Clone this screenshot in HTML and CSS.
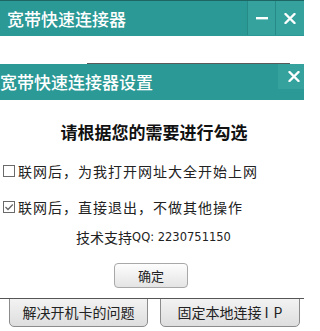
FILE: index.html
```html
<!DOCTYPE html>
<html lang="zh-CN">
<head>
<meta charset="utf-8">
<title>宽带快速连接器</title>
<link rel="stylesheet" href="styles.css">
</head>
<body>
<div class="main">
  <div class="titlebar">
    <div class="title">宽带快速连接器</div>
    <div class="win-btns">
      <div class="wbtn min"><svg width="12" height="4" viewBox="0 0 12 4"><rect x="0" y="1" width="12" height="2.4" fill="#fff"/></svg></div>
      <div class="wbtn close"><svg width="12" height="11" viewBox="0 0 12 11"><path d="M1.5 1 L10.5 10 M10.5 1 L1.5 10" stroke="#fff" stroke-width="2.4" stroke-linecap="round"/></svg></div>
    </div>
  </div>
  <div class="main-body">
    <div class="bottom-btns">
      <div class="big-btn">解决开机卡的问题</div>
      <div class="big-btn">固定本地连接<span class="ip">IP</span></div>
    </div>
  </div>
</div>

<div class="dialog">
  <div class="dlg-titlebar">
    <div class="dlg-title">宽带快速连接器设置</div>
    <div class="dlg-close"><svg width="12" height="11" viewBox="0 0 12 11"><path d="M1.5 1 L10.5 10 M10.5 1 L1.5 10" stroke="#fff" stroke-width="2.4" stroke-linecap="round"/></svg></div>
  </div>
  <div class="dlg-body">
    <div class="heading">请根据您的需要进行勾选</div>
    <div class="opt opt1"><span class="cbox"></span><span class="opt-text">联网后，为我打开网址大全开始上网</span></div>
    <div class="opt opt2"><span class="cbox checked"><svg width="10" height="10" viewBox="0 0 10 10"><path d="M1.5 5 L4 7.5 L8.8 2.5" fill="none" stroke="#666" stroke-width="1.3"/></svg></span><span class="opt-text">联网后，直接退出，不做其他操作</span></div>
    <div class="support"><span class="cn">技术支持</span><span class="qq">QQ: 2230751150</span></div>
    <div class="ok-btn">确定</div>
  </div>
</div>
</body>
</html>
```

FILE: styles.css
```css
* { box-sizing: border-box; }
html, body {
  margin: 0;
  padding: 0;
  width: 304px;
  height: 331px;
  overflow: hidden;
  background: #fff;
  font-family: "Noto Sans CJK SC", "Noto Sans", sans-serif;
}
.main {
  position: relative;
  width: 304px;
  height: 331px;
  display: flex;
  flex-direction: column;
}
.titlebar {
  height: 36px;
  background: #2b9995;
  border-top: 1px solid #1d6663;
  display: flex;
  align-items: stretch;
  justify-content: space-between;
}
.title {
  color: #fff;
  font-size: 17px;
  line-height: 35px;
  padding-left: 7px;
  font-weight: 500;
}
.win-btns {
  display: flex;
  height: 34px;
}
.wbtn {
  display: flex;
  align-items: center;
  justify-content: center;
  background: #35a29e;
  border-left: 1px solid #268a86;
}
.wbtn.min { width: 28px; }
.wbtn.close { width: 29px; }
.main-body {
  flex: 1;
  display: flex;
  flex-direction: column;
  justify-content: flex-end;
  padding-bottom: 4px;
}
.bottom-btns {
  display: flex;
  gap: 12px;
  padding-left: 9px;
}
.big-btn {
  height: 40px;
  padding-top: 10px;
  display: flex;
  align-items: center;
  justify-content: center;
  font-size: 14px;
  color: #222;
  border: 1px solid #8c8c8c;
  border-radius: 5px;
  background: linear-gradient(#fbfbfb, #dedede);
}
.big-btn:first-child { width: 139px; }
.big-btn:last-child { width: 140px; }
.ip { letter-spacing: 5px; margin-left: 3px; margin-right: -5px; }

.dialog {
  position: absolute;
  top: 64px;
  left: 0;
  width: 304px;
  height: 235px;
  background: #fff;
  border-bottom: 1px solid #555;
  display: flex;
  flex-direction: column;
}
.dialog::before {
  content: "";
  position: absolute;
  top: -1px;
  left: 87px;
  width: 203px;
  height: 1px;
  background: #5a5a5a;
}
.dlg-titlebar {
  height: 36px;
  background: #2b9995;
  display: flex;
  justify-content: space-between;
  align-items: flex-start;
}
.dlg-title {
  color: #fff;
  font-size: 17px;
  line-height: 36px;
  font-weight: 500;
}
.dlg-close {
  width: 26px;
  height: 25px;
  background: #35a29e;
  display: flex;
  align-items: center;
  justify-content: center;
  padding-left: 5px;
}
.dlg-body {
  flex: 1;
  display: flex;
  flex-direction: column;
}
.heading {
  margin-top: 22px;
  text-align: center;
  font-size: 17px;
  font-weight: 700;
  line-height: 20px;
  color: #111;
  padding-left: 4px;
}
.opt {
  display: flex;
  align-items: center;
  padding-left: 3px;
  height: 20px;
  font-size: 14px;
  letter-spacing: 1px;
  color: #222;
}
.opt1 { margin-top: 19px; }
.opt2 { margin-top: 16px; }
.cbox {
  width: 12px;
  height: 12px;
  border: 1px solid #6a6a6a;
  margin-right: 3px;
  display: flex;
  align-items: center;
  justify-content: center;
  background: #fff;
}
.support {
  margin-top: 10px;
  height: 20px;
  display: flex;
  align-items: center;
  justify-content: center;
  padding-left: 3px;
  color: #222;
}
.support .cn { font-size: 14px; }
.support .qq { font-family: "DejaVu Sans", sans-serif; font-size: 11.5px; }
.ok-btn {
  margin-top: 16px;
  align-self: flex-start;
  margin-left: 114px;
  width: 74px;
  height: 25px;
  display: flex;
  align-items: center;
  justify-content: center;
  font-size: 13px;
  color: #222;
  border: 1px solid #a8a8a8;
  border-radius: 4px;
  background: linear-gradient(#fdfdfd, #e4e4e4);
}
```
